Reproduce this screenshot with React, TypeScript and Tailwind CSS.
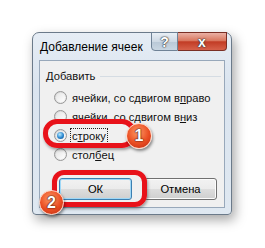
import React from "react";

const bodyFont = { fontFamily: '"Liberation Sans", Arial, sans-serif' };

function Radio({ checked }: { checked?: boolean }) {
  return (
    <div className="w-[13px] h-[13px] rounded-full border border-[#979797] bg-[linear-gradient(135deg,#d2d2d2,#f7f7f7)] flex items-center justify-center shrink-0">
      <div className="w-[9px] h-[9px] rounded-full bg-[linear-gradient(135deg,#e4e4e4,#ffffff)] flex items-center justify-center">
        {checked && (
          <div className="w-[7px] h-[7px] rounded-full bg-[radial-gradient(circle_at_40%_35%,#b9ecff,#2a86cf_55%,#0e4a7e)]" />
        )}
      </div>
    </div>
  );
}

function Row({ children, checked }: { children: React.ReactNode; checked?: boolean }) {
  return (
    <div className="h-[19px] flex items-center pl-[14px] gap-[5px]">
      <Radio checked={checked} />
      <span className="text-[11.2px] leading-[12px] text-[#111]">{children}</span>
    </div>
  );
}

export default function App() {
  return (
    <div className="relative w-[265px] h-[248px] bg-white overflow-hidden pl-[32px] pt-[32px]" style={bodyFont}>
      <div className="w-[200px] h-[183px] rounded-t-[7px] rounded-b-[4px] border border-[#6b7a8a] bg-[linear-gradient(180deg,#e6edf5,#dae4ef_30%,#dfe8f1)] shadow-[3px_5px_12px_rgba(0,0,0,0.35)] flex flex-col">
        <div className="relative h-[27px] flex items-center pl-[7px]">
          <span className="text-[12px] text-black">Добавление ячеек</span>
          <div className="absolute top-[-1px] right-[4px] flex h-[19px]">
            <div className="w-[27px] h-[19px] border border-[#6f8296] rounded-bl-[4px] bg-[linear-gradient(180deg,#e9eff5,#ced9e4_50%,#b9c8d6_51%,#c9d6e2)] flex items-center justify-center">
              <span className="text-[14px] font-bold text-white leading-none [text-shadow:0_0_1px_#333,0_0_1px_#333,0_0_2px_#444]">?</span>
            </div>
            <div className="w-[49px] h-[19px] border border-l-0 border-[#7a2f25] rounded-br-[4px] bg-[linear-gradient(180deg,#eab1a5,#d9775f_45%,#c23c25_52%,#d6614a)] flex items-center justify-center">
              <span className="text-[14px] font-bold text-white leading-none [text-shadow:0_0_1px_#333,0_0_1px_#333,0_0_2px_#444]">x</span>
            </div>
          </div>
        </div>
        <div className="mx-[6px] mb-[6px] flex-1 bg-[#f0f0f0] border border-[#98a8ba] flex flex-col">
          <div className="h-[27px] pt-[4px] flex items-center pl-[6px] pr-[3px] gap-[5px]">
            <span className="text-[11.2px] text-[#111]">Добавить</span>
            <div className="flex-1 h-px bg-[#d5dce3]" />
          </div>
          <Row>
            ячейки, со сдвигом в<span className="underline">п</span>раво
          </Row>
          <Row>
            ячейки, со сдвигом в<span className="underline">н</span>из
          </Row>
          <Row checked>
            <span className="outline outline-1 outline-dotted outline-[#222] outline-offset-[1px]">
              с<span className="underline">т</span>року
            </span>
          </Row>
          <Row>
            стол<span className="underline">б</span>ец
          </Row>
          <div className="mt-[14px] flex pl-[19px] gap-[12px]">
            <div className="w-[73px] h-[22px] rounded-[3px] border border-[#3c7fb1] bg-[linear-gradient(180deg,#f2f2f2,#ebebeb_50%,#dddddd_51%,#cfcfcf)] shadow-[inset_0_0_0_1px_#9fd8f7] flex items-center justify-center">
              <span className="text-[11.2px] text-black">ОК</span>
            </div>
            <div className="w-[73px] h-[22px] rounded-[3px] border border-[#707070] bg-[linear-gradient(180deg,#f2f2f2,#ebebeb_50%,#dddddd_51%,#cfcfcf)] shadow-[inset_0_0_0_1px_#fcfcfc] flex items-center justify-center">
              <span className="text-[11.2px] text-black">Отмена</span>
            </div>
          </div>
        </div>
      </div>

      {/* annotations */}
      <div className="absolute left-[43px] top-[119px] w-[93px] h-[29px] rounded-[14px] border-[5px] border-[#e8121a] shadow-[1px_2px_3px_rgba(0,0,0,0.35)]" />
      <div className="absolute left-[52px] top-[170px] w-[95px] h-[37px] rounded-[12px] border-[5px] border-[#e8121a] shadow-[1px_2px_3px_rgba(0,0,0,0.35)]" />
      <div className="absolute left-[126px] top-[123px] w-[26px] h-[26px] rounded-full border-[1.5px] border-[#ffd9c9] bg-[radial-gradient(circle_at_45%_35%,#ff9a66,#ea4d22_55%,#b82a12)] shadow-[1px_2px_3px_rgba(0,0,0,0.45)] flex items-center justify-center">
        <span className="text-[16px] font-bold text-white leading-none [text-shadow:0_0_1px_#5a1a0a,0_0_1px_#5a1a0a,0_0_2px_#5a1a0a]">1</span>
      </div>
      <div className="absolute left-[39px] top-[190px] w-[25px] h-[25px] rounded-full border-[1.5px] border-[#ffd9c9] bg-[radial-gradient(circle_at_45%_35%,#ff9a66,#ea4d22_55%,#b82a12)] shadow-[1px_2px_3px_rgba(0,0,0,0.45)] flex items-center justify-center">
        <span className="text-[16px] font-bold text-white leading-none [text-shadow:0_0_1px_#5a1a0a,0_0_1px_#5a1a0a,0_0_2px_#5a1a0a]">2</span>
      </div>
    </div>
  );
}
